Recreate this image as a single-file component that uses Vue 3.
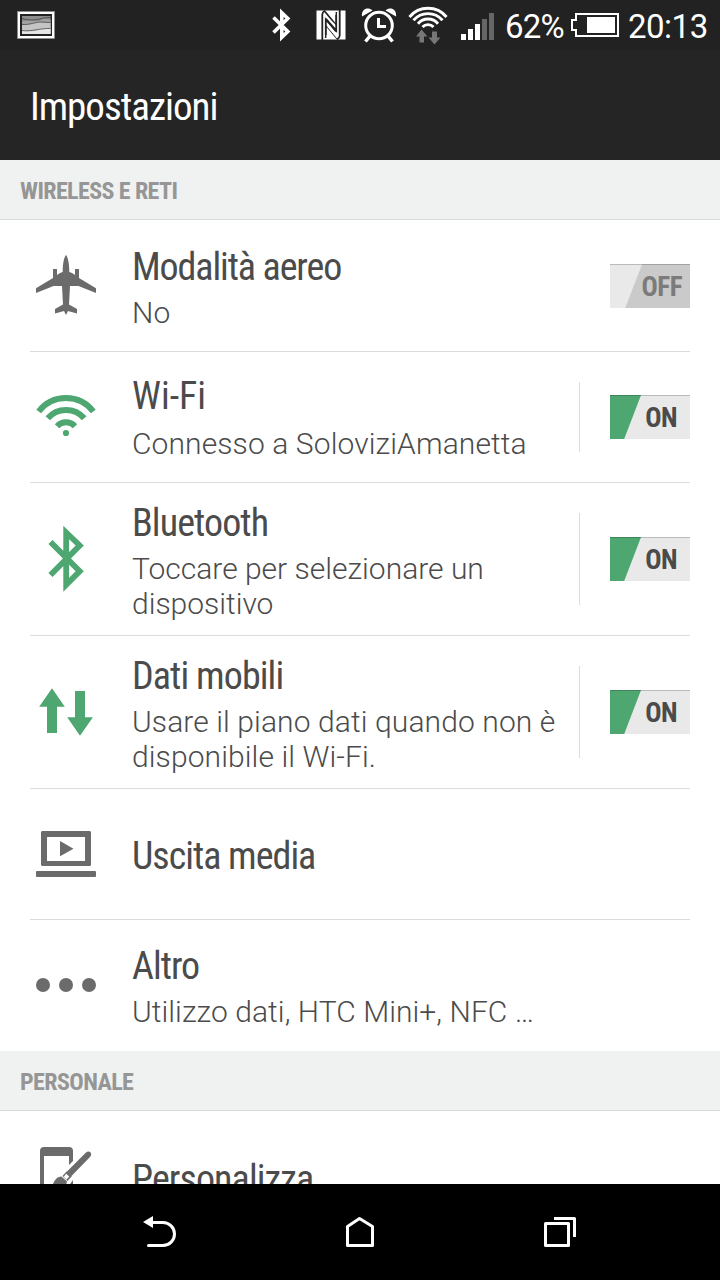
<template>
  <div class="screen">
    <header class="status-bar">
      <svg class="thumb" width="40" height="30" viewBox="16 10 40 30">
        <rect x="17.5" y="11.5" width="37" height="27" fill="#fff" stroke="#8a8f8a" stroke-width="0.8" />
        <rect x="20" y="14" width="32" height="22" fill="#222" />
        <rect x="22" y="16" width="28.500" height="18" fill="#8d8d8d" />
        <path d="M22 21.500L29 20.500L38 21L44 19L50.500 19.500V34H22Z" fill="#a2a2a2" />
        <path d="M22 24.500L30 24L39 22L50.500 22.500V34H22Z" fill="#c4c4c4" />
        <path d="M22 30.500L33 31L43 28.500L50.500 28V34H22Z" fill="#e6e6e6" />
        <path d="M22 18.500C30 21 38 20 43 18L50.500 17.500M22 24.500C30 25 36 22 40 22L50.500 22.500M22 30.500C32 32 40 28 50.500 28.500" fill="none" stroke="#444" stroke-width="0.8" />
      </svg>
      <div class="status-icons">
        <svg class="s-bt" width="22" height="38" viewBox="271 6 22 38" fill="none" stroke="#fff" stroke-width="3.600">
          <path d="M273.500 17.500L287.800 31.500L281.800 37.300V12.700L287.800 18.500L273.500 32.500" />
        </svg>
        <svg class="s-nfc" width="30" height="32" viewBox="316 9 30 32">
          <rect x="316.500" y="10.500" width="29" height="29" fill="#fff" />
          <path d="M322.300 40V14.500Q322.500 12 324.500 11L336.500 25.500V12M339.700 10V35.500Q339.500 38 337.500 39L325.500 24.500V38" fill="none" stroke="#222" stroke-width="1.800" />
          <path d="M324 13.500V37L325 38V24L337 38.500L338 36.500V13L337 12V26Z" fill="#fff" />
          <path d="M325.800 35V19.500L336 31.500M336.200 15V30.500L326 18.800" fill="none" stroke="#222" stroke-width="1.800" />
          <path d="M328 24L334 31.500" stroke="#fff" stroke-width="1" />
        </svg>
        <svg class="s-alarm" width="38" height="36" viewBox="360 7 38 36" fill="none" stroke="#fff">
          <circle cx="379" cy="25.500" r="13.300" stroke-width="3" />
          <path d="M378.500 18V26.500H386" stroke-width="3" />
          <path d="M370 36L365.500 41.500M388 36L392.500 41.500" stroke-width="3.500" />
          <path d="M362 16.500C361 10 367 6 372.500 10.500ZM396 16.500C397 10 391 6 385.500 10.500Z" fill="#fff" stroke="none" />
        </svg>
        <svg class="s-wifi" width="42" height="42" viewBox="407 4 42 42" fill="none" stroke="#fff" stroke-width="2.900">
          <path d="M409.500 17A24 24 0 0 1 446.500 17M413.500 20.300A19 19 0 0 1 442.500 20.300M418 23.700A13 13 0 0 1 438 23.700M422.500 27A7.500 7.500 0 0 1 433.500 27" />
          <path d="M421.500 29.500L427.500 36.500H424V42.500H419.500V36.500H416Z M434.500 44.500L428.500 37.500H432V31.500H437V37.500H440.500Z" fill="#777" stroke="none" />
        </svg>
        <svg class="s-signal" width="34" height="28" viewBox="461 13 34 28">
          <path d="M461 34h5v6h-5zM468 29h5v11h-5zM475 24h5v16h-5z" fill="#fff" />
          <path d="M482 19h5v21h-5zM489 13h5v27h-5z" fill="#666" />
        </svg>
        <span class="battery-label">62%</span>
        <svg class="s-battery" width="48" height="24" viewBox="571 13 48 24">
          <path d="M576 14H618V36H576V30H572V20H576Z" fill="none" stroke="#fff" stroke-width="2" />
          <rect x="587" y="17" width="28" height="16" fill="#fff" />
        </svg>
        <span class="clock">20:13</span>
      </div>
    </header>

    <div class="title-bar">
      <h1><span class="cond">Impostazioni</span></h1>
    </div>

    <main class="content">
      <section v-for="section in sections" :key="section.title">
        <h2 class="section-title"><span class="cond">{{ section.title }}</span></h2>
        <div v-for="row in section.rows" :key="row.icon" class="row" :class="row.icon">
          <div class="row-icon">
            <svg v-if="row.icon === 'airplane'" width="72" height="66" viewBox="30 253 72 66" fill="#6b6b6b">
              <path d="M66 255C68 257 69.300 264 69.300 272L72 273L75 275V269H79V278L96 288.300V293L78.500 286H70L69 304.500L77 309V313.500L68 311L66 315L64 311L55 313.500V309L63 304.500L62 286H53.500L36 293V288.300L53 278V269H57V275L60 273L62.700 272C62.700 264 64 257 66 255Z" />
            </svg>
            <svg v-else-if="row.icon === 'wifi'" width="72" height="46" viewBox="30 394 72 46" fill="none" stroke="#4ea671" stroke-width="6">
              <path d="M38.700 411.500A34.400 34.400 0 0 1 93.300 411.500M47.800 418.300A24 24 0 0 1 84.200 418.300M57 426.200A12.300 12.300 0 0 1 75 426.200" />
              <circle cx="66" cy="433" r="3.100" fill="#4ea671" stroke="none" />
            </svg>
            <svg v-else-if="row.icon === 'bluetooth'" width="72" height="68" viewBox="30 525 72 68" fill="none" stroke="#4ea671" stroke-width="5.800">
              <path d="M50.500 542L79.700 571.200L66.200 584.700V532.500L79.700 545.500L50.500 575" />
            </svg>
            <svg v-else-if="row.icon === 'data'" width="72" height="50" viewBox="30 687 72 50" fill="#4ea671">
              <path d="M52 688.300L64.800 706.800H57V733H47V706.800H39.200Z" />
              <path d="M80 735.800L92.900 717.300H85V691H75V717.300H67.200Z" />
            </svg>
            <svg v-else-if="row.icon === 'media'" width="72" height="48" viewBox="30 830 72 48" fill="#6b6b6b">
              <path fill-rule="evenodd" d="M42 831H90L91 832V865L90 866H42L41 865V832ZM47 837V861H85V837Z" />
              <path d="M60 841L73.500 848.700L60 856.300Z" />
              <rect x="36" y="871" width="60" height="6" rx="1" />
            </svg>
            <svg v-else-if="row.icon === 'more'" width="72" height="16" viewBox="30 977 72 16" fill="#6b6b6b">
              <circle cx="43" cy="985" r="7" />
              <circle cx="66" cy="985" r="7" />
              <circle cx="89" cy="985" r="7" />
            </svg>
            <svg v-else width="72" height="58" viewBox="30 1147 72 58" fill="#6b6b6b">
              <path d="M44 1147H69Q73 1147 73 1151V1161L69 1165V1156H44V1200H40V1151Q40 1147 44 1147Z" />
              <path d="M70 1184L73 1180V1200H69V1184Z" />
              <path d="M85.500 1153Q88.500 1150.500 90.500 1152.500Q92 1154.500 90 1157L71.500 1176L67 1171.500Z" />
              <path d="M67 1171L72 1176L67.500 1181L62.500 1176Z" />
              <path d="M66.200 1173.800L69.200 1176.500L66.500 1179.500L63.800 1176.800Z" fill="#fff" />
              <path d="M61.500 1176.500L67 1181.500C66 1188 60 1191 48 1190C54 1187 53 1177 61.500 1176.500Z" />
            </svg>
          </div>
          <div class="row-text">
            <div class="row-title"><span class="cond">{{ row.title }}</span></div>
            <div v-if="row.summary" class="row-summary">{{ row.summary }}</div>
          </div>
          <div v-if="row.divider" class="divider"></div>
          <button v-if="row.on !== undefined" class="switch" :class="{ on: row.on }" @click="row.on = !row.on">
            <span class="cond">{{ row.on ? 'ON' : 'OFF' }}</span>
          </button>
        </div>
      </section>
    </main>

    <nav class="nav-bar">
      <svg width="200" height="96" viewBox="60 1184 200 96" fill="none" stroke="#fff" stroke-width="3" stroke-linecap="round">
        <path d="M152 1222.500H163A11.500 11.500 0 0 1 163 1245.500H148.500" />
        <path d="M143 1222L153 1216V1228Z" fill="#fff" stroke="none" />
      </svg>
      <svg width="200" height="96" viewBox="260 1184 200 96" fill="none" stroke="#fff" stroke-width="3" stroke-linejoin="round">
        <path d="M347.500 1226.500L359.500 1218.500L372.500 1226.500V1245.500H347.500Z" />
      </svg>
      <svg width="200" height="96" viewBox="460 1184 200 96" fill="none" stroke="#fff" stroke-width="3" stroke-linejoin="round">
        <rect x="545.500" y="1223.500" width="23" height="22" />
        <path d="M554 1218.500H574.500V1237" />
      </svg>
    </nav>
  </div>
</template>

<script setup>
import { ref } from 'vue'

const sections = ref([
  {
    title: 'WIRELESS E RETI',
    rows: [
      { icon: 'airplane', title: 'Modalità aereo', summary: 'No', on: false },
      { icon: 'wifi', title: 'Wi-Fi', summary: 'Connesso a SoloviziAmanetta', on: true, divider: true },
      { icon: 'bluetooth', title: 'Bluetooth', summary: 'Toccare per selezionare un dispositivo', on: true, divider: true },
      { icon: 'data', title: 'Dati mobili', summary: 'Usare il piano dati quando non è disponibile il Wi-Fi.', on: true, divider: true },
      { icon: 'media', title: 'Uscita media' },
      { icon: 'more', title: 'Altro', summary: 'Utilizzo dati, HTC Mini+, NFC …' },
    ],
  },
  {
    title: 'PERSONALE',
    rows: [{ icon: 'personalize', title: 'Personalizza' }],
  },
])
</script>

<style>
body {
  margin: 0;
  background: #000;
}
</style>

<style scoped>
.screen {
  width: 720px;
  height: 1280px;
  display: flex;
  flex-direction: column;
  overflow: hidden;
  background: #fff;
  font-family: Roboto, 'Liberation Sans', sans-serif;
}

svg {
  display: block;
  flex: none;
}

h1,
h2 {
  margin: 0;
}

.cond {
  display: inline-block;
  font-family: 'Roboto Condensed', Roboto, sans-serif;
  font-stretch: 75%;
  white-space: nowrap;
}

.status-bar {
  flex: none;
  display: flex;
  align-items: center;
  justify-content: space-between;
  height: 50px;
  background: #222;
  color: #fff;
  font-size: 33px;
  letter-spacing: -0.5px;
}

.thumb {
  margin-left: 16px;
}

.status-icons {
  display: flex;
  align-items: center;
  margin-right: 12px;
}

.s-nfc {
  margin-left: 23px;
}

.s-alarm {
  margin-left: 14px;
}

.s-wifi {
  margin-left: 9px;
}

.s-signal {
  margin: 3px 0 0 12px;
}

.battery-label {
  width: 60px;
  margin-left: 10px;
  padding-top: 2px;
  letter-spacing: -0.8px;
}

.s-battery {
  margin-left: 6px;
}

.clock {
  width: 80px;
  margin-left: 9px;
  padding-top: 2px;
}

.title-bar {
  flex: none;
  display: flex;
  align-items: center;
  height: 110px;
  padding: 4px 0 0 30px;
  box-sizing: border-box;
  background: #252525;
  color: #fff;
}

.title-bar h1 {
  font-size: 39px;
  font-weight: 450;
  letter-spacing: -1px;
}

.content {
  flex: 1;
  min-height: 0;
  overflow: hidden;
}

.section-title {
  height: 60px;
  padding-left: 20px;
  box-sizing: border-box;
  border-bottom: 1px solid #d9dbda;
  background: #f0f2f1;
  color: #969696;
  font-size: 24px;
  font-weight: 700;
  letter-spacing: -0.6px;
  line-height: 62px;
}

.row {
  display: flex;
  align-items: center;
  height: 131px;
  margin: 0 30px;
  box-sizing: border-box;
  border-bottom: 1px solid #dcdcdc;
}

.row.airplane {
  height: 132px;
  padding-top: 1px;
}

.row.bluetooth,
.row.data {
  height: 153px;
}

.row.more {
  border-bottom-color: transparent;
}

.row-icon {
  width: 72px;
  margin-right: 30px;
}

.row-text {
  flex: 1;
  padding-top: 2px;
}

.wifi .row-text {
  padding-top: 0;
}

.bluetooth .row-text,
.data .row-text,
.media .row-text {
  padding-top: 4px;
}

.personalize .row-text {
  padding-top: 6px;
}

.row-title {
  color: #4b4b4b;
  font-size: 38px;
  font-weight: 450;
  letter-spacing: -1px;
  line-height: 44px;
}

.airplane .row-title {
  letter-spacing: -1.1px;
}

.bluetooth .row-title,
.data .row-title,
.personalize .row-title {
  letter-spacing: -0.9px;
}

.wifi .row-title {
  letter-spacing: 0;
}

.row-summary {
  margin-top: 6px;
  color: #4b4b4b;
  font-size: 30px;
  font-weight: 300;
  letter-spacing: 0.1px;
  line-height: 35px;
}

.wifi .row-summary {
  margin-top: 8px;
}

.bluetooth .row-summary {
  letter-spacing: 0;
}

.more .row-summary {
  letter-spacing: 0.06px;
}

.divider {
  align-self: stretch;
  width: 1px;
  margin: 30px 30px 30px 0;
  background: #dcdcdc;
}

.switch {
  flex: none;
  width: 80px;
  height: 44px;
  padding: 2px 8px 0 0;
  border: none;
  border-radius: 0;
  background: linear-gradient(rgba(0, 0, 0, 0.2) 1px, transparent 1px), linear-gradient(111deg, #e9e9e9 29.5px, #cacaca 30.5px);
  color: #7b7b7b;
  font-size: 27px;
  font-weight: 700;
  letter-spacing: -0.5px;
  text-align: right;
}

.switch.on {
  padding-right: 13px;
  background: linear-gradient(rgba(0, 0, 0, 0.2) 1px, transparent 1px), linear-gradient(111deg, #4ea671 28.5px, #e9e9e9 29.5px);
  color: #4b4b4b;
}

.nav-bar {
  flex: none;
  display: flex;
  justify-content: center;
  height: 96px;
  background: #000;
}
</style>
